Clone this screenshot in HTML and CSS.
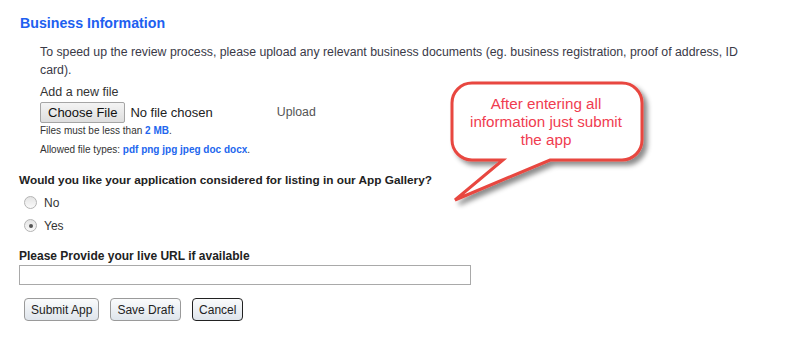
FILE: index.html
```html
<!DOCTYPE html>
<html>
<head>
    <title>Business Information</title>
    <link rel="stylesheet" href="styles.css">
</head>
<body>
    <div class="page">
        <h2 class="section-title">Business Information</h2>
        <div class="upload-block">
            <p class="intro">To speed up the review process, please upload any relevant business documents (eg. business registration, proof of address, ID card).</p>
            <div class="field-label">Add a new file</div>
            <div class="file-row">
                <button type="button" class="file-btn">Choose File</button>
                <span class="file-name">No file chosen</span>
                <span class="upload-link">Upload</span>
            </div>
            <div class="hint">Files must be less than <strong>2 MB</strong>.</div>
            <div class="hint">Allowed file types: <strong>pdf png jpg jpeg doc docx</strong>.</div>
        </div>

        <div class="question">Would you like your application considered for listing in our App Gallery?</div>
        <label class="radio-row"><input type="radio" name="gallery"> No</label>
        <label class="radio-row"><input type="radio" name="gallery" checked> Yes</label>

        <div class="url-label">Please Provide your live URL if available</div>
        <input type="text" class="url-input">

        <div class="actions">
            <button type="button" class="btn">Submit App</button>
            <button type="button" class="btn">Save Draft</button>
            <button type="button" class="btn btn-focus">Cancel</button>
        </div>
    </div>

    <!-- Callout note -->
    <div class="callout">
        <svg width="220" height="140" viewBox="0 0 220 140">
            <defs>
                <filter id="shadow" x="-10%" y="-10%" width="130%" height="140%">
                    <feDropShadow dx="4" dy="4" stdDeviation="2.5" flood-color="#000" flood-opacity="0.45"/>
                </filter>
            </defs>
            <path d="M32 8 H182 A20 20 0 0 1 202 28 V65 A20 20 0 0 1 182 85 H110 L15 125 L63 85 H32 A20 20 0 0 1 12 65 V28 A20 20 0 0 1 32 8 Z"
                  fill="#fff" stroke="#e8463f" stroke-width="3" stroke-linejoin="miter" filter="url(#shadow)"/>
        </svg>
        <div class="callout-text">After entering all information just submit the app</div>
    </div>
</body>
</html>
```

FILE: styles.css
```css
body {
    margin: 0;
    font-family: "Liberation Sans", Arial, sans-serif;
    background: #fff;
    color: #333;
}
.page {
    padding: 14px 0 0 19px;
}
.section-title {
    margin: 0 0 0 1px;
    font-size: 14.2px;
    line-height: 18px;
    color: #2060f0;
    font-weight: bold;
}
.upload-block {
    padding: 11px 0 0 21px;
}
.intro {
    margin: 0;
    width: 720px;
    font-size: 12.3px;
    line-height: 18px;
    color: #3a3a48;
}
.field-label {
    margin-top: 5px;
    font-size: 12.5px;
    line-height: 16px;
    color: #333;
}
.file-row {
    display: flex;
    align-items: center;
    margin-top: 1px;
    height: 22px;
}
.file-btn {
    font-family: "Liberation Sans", Arial, sans-serif;
    font-size: 13px;
    color: #111;
    padding: 0 7px;
    height: 21px;
    border: 1px solid #a5a5a5;
    border-radius: 2px;
    background: linear-gradient(#f4f4f4, #dedede);
}
.file-name {
    margin-left: 5px;
    font-size: 13px;
    color: #222;
}
.upload-link {
    margin-left: 64px;
    font-size: 12.3px;
    color: #555;
}
.hint {
    margin-top: 1px;
    font-size: 10px;
    line-height: 14px;
    color: #333;
}
.hint + .hint {
    margin-top: 5px;
}
.hint strong {
    color: #2266ee;
}
.question {
    margin-top: 15px;
    font-size: 11.8px;
    font-weight: bold;
    line-height: 16px;
    color: #222;
}
.radio-row {
    display: flex;
    align-items: center;
    height: 23px;
    font-size: 12px;
    color: #333;
}
.radio-row:first-of-type {
    margin-top: 3px;
}
.radio-row input {
    appearance: none;
    -webkit-appearance: none;
    width: 13px;
    height: 13px;
    margin: 0 7px 0 5px;
    border: 1px solid #b4b4b4;
    border-radius: 50%;
    background: linear-gradient(#e4e4e4, #fafafa);
    position: relative;
}
.radio-row input:checked::after {
    content: "";
    position: absolute;
    left: 3.5px;
    top: 3.5px;
    width: 4px;
    height: 4px;
    border-radius: 50%;
    background: #555;
}
.url-label {
    margin-top: 11px;
    font-size: 12px;
    font-weight: bold;
    line-height: 16px;
    color: #222;
}
.url-input {
    display: block;
    margin-top: 1px;
    width: 452px;
    height: 20px;
    box-sizing: border-box;
    border: 1px solid #a9a9a9;
    padding: 0;
}
.actions {
    display: flex;
    gap: 11px;
    margin: 13px 0 0 5px;
}
.btn {
    font-family: "Liberation Sans", Arial, sans-serif;
    font-size: 12px;
    color: #222;
    height: 23px;
    padding: 0 6px;
    border: 1px solid #9a9a9a;
    border-radius: 4px;
    background: linear-gradient(#fafbfc, #dfe5ec);
}
.btn-focus {
    border-color: #222;
}
.callout {
    position: absolute;
    left: 440px;
    top: 75px;
    width: 220px;
    height: 140px;
}
.callout svg {
    display: block;
}
.callout-text {
    position: absolute;
    left: 29px;
    top: 20px;
    width: 154px;
    text-align: center;
    font-size: 15.2px;
    line-height: 18px;
    color: #f03c50;
}
```
